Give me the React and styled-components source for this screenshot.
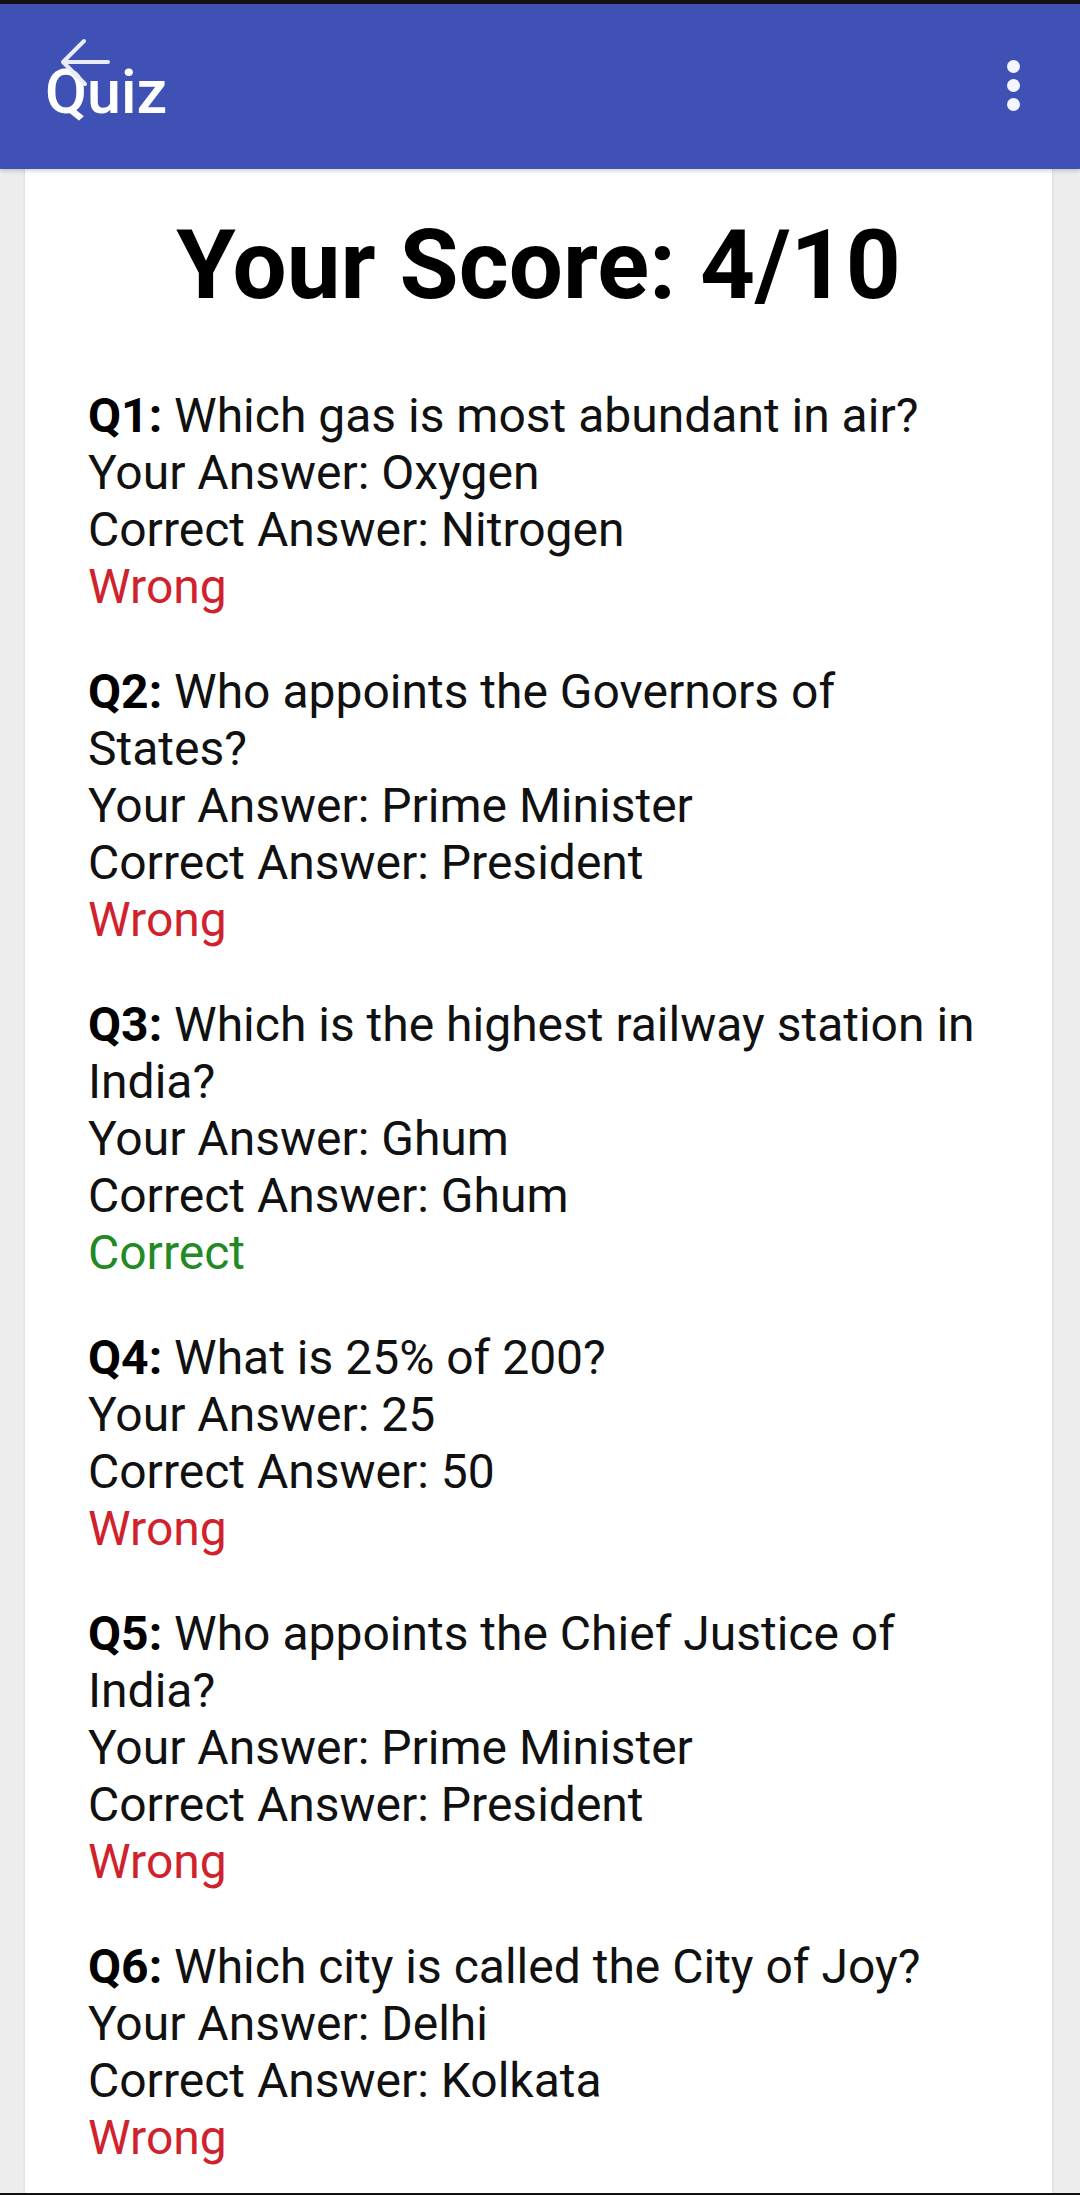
import React from "react";
import styled, { createGlobalStyle } from "styled-components";

const GlobalStyle = createGlobalStyle`
  html, body {
    margin: 0;
    padding: 0;
    background: #ededed;
  }
  * { box-sizing: border-box; }
`;

const Screen = styled.div`
  height: 2195px;
  display: flex;
  flex-direction: column;
  overflow: hidden;
  background: #ededed;
  font-family: Roboto, "Noto Sans", "Liberation Sans", sans-serif;
`;

const StatusStrip = styled.div`
  flex: 0 0 4px;
  background: #101218;
`;

const AppBar = styled.header`
  position: relative;
  z-index: 2;
  flex: 0 0 165px;
  background: #3f51b5;
  display: flex;
  align-items: center;
  justify-content: space-between;
  padding: 0 60px 0 45px;
  box-shadow: 0 2px 4px rgba(0, 0, 0, 0.18);
`;

const BarTitle = styled.h2`
  align-self: flex-start;
  margin: 52px 0 0;
  font-size: 61px;
  font-weight: 500;
  line-height: normal;
  color: #ffffff;
`;

const BackArrow = styled.svg`
  position: absolute;
  left: 58px;
  top: 34px;
  width: 54px;
  height: 52px;
`;

const Overflow = styled.div`
  display: flex;
  flex-direction: column;
  gap: 6px;
  margin-top: -2px;
`;

const Dot = styled.span`
  width: 13px;
  height: 13px;
  border-radius: 50%;
  background: #f4f6ff;
`;

const Content = styled.main`
  flex: 1 1 auto;
  min-height: 0;
  overflow: hidden;
  padding: 0 28px 0 25px;
`;

const Card = styled.section`
  min-height: 100%;
  background: #ffffff;
  padding: 40px 63px 60px;
  box-shadow: 0 0 3px rgba(0, 0, 0, 0.12);
`;

const ScoreHeading = styled.h1`
  margin: 0;
  text-align: center;
  font-size: 96px;
  font-weight: 700;
  line-height: normal;
  color: #000000;
`;

const ResultList = styled.div`
  margin-top: 66px;
  display: flex;
  flex-direction: column;
  gap: 48px;
`;

const ResultItem = styled.div`
  font-size: 48px;
  line-height: 57px;
  color: #111111;
`;

const Line = styled.div``;

const QLabel = styled.b`
  font-weight: 700;
  color: #000;
`;

const Verdict = styled.div`
  color: ${(p) => (p.$ok ? "#218a25" : "#d0222d")};
`;

const BottomEdge = styled.div`
  flex: 0 0 2px;
  background: #111;
`;

const results = [
  { q: "Which gas is most abundant in air?", yours: "Oxygen", correct: "Nitrogen" },
  { q: "Who appoints the Governors of States?", yours: "Prime Minister", correct: "President" },
  { q: "Which is the highest railway station in India?", yours: "Ghum", correct: "Ghum" },
  { q: "What is 25% of 200?", yours: "25", correct: "50" },
  { q: "Who appoints the Chief Justice of India?", yours: "Prime Minister", correct: "President" },
  { q: "Which city is called the City of Joy?", yours: "Delhi", correct: "Kolkata" },
];

export default function App() {
  return (
    <>
      <GlobalStyle />
      <Screen>
        <StatusStrip />
        <AppBar>
          <BarTitle>Quiz</BarTitle>
          <BackArrow viewBox="0 0 54 52" fill="none">
            <path
              d="M50 24 H5 M26 3 L5 24 L27 46"
              stroke="#e9ebf5"
              strokeWidth="4"
              strokeLinecap="round"
              strokeLinejoin="round"
            />
          </BackArrow>
          <Overflow>
            <Dot />
            <Dot />
            <Dot />
          </Overflow>
        </AppBar>
        <Content>
          <Card>
            <ScoreHeading>Your Score: 4/10</ScoreHeading>
            <ResultList>
              {results.map((r, i) => {
                const ok = r.yours === r.correct;
                return (
                  <ResultItem key={i}>
                    <Line>
                      <QLabel>Q{i + 1}:</QLabel> {r.q}
                    </Line>
                    <Line>Your Answer: {r.yours}</Line>
                    <Line>Correct Answer: {r.correct}</Line>
                    <Verdict $ok={ok}>{ok ? "Correct" : "Wrong"}</Verdict>
                  </ResultItem>
                );
              })}
            </ResultList>
          </Card>
        </Content>
        <BottomEdge />
      </Screen>
    </>
  );
}
